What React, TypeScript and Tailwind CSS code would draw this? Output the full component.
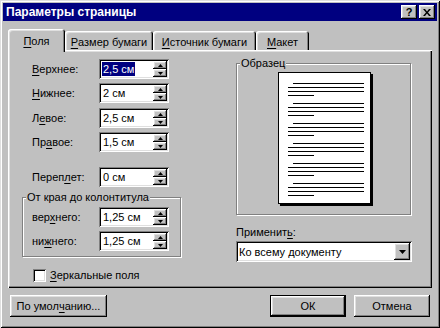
const FONT = "font-['Liberation_Sans',Arial,sans-serif]"

// classic 3D bevels
const raised =
  'shadow-[inset_-1px_-1px_0_#000,inset_1px_1px_0_#fff,inset_-2px_-2px_0_#808080,inset_2px_2px_0_#dfdfdf]'
const sunken =
  'shadow-[inset_1px_1px_0_#808080,inset_-1px_-1px_0_#fff,inset_2px_2px_0_#000,inset_-2px_-2px_0_#dfdfdf]'
const etched = 'border border-[#808080] shadow-[inset_1px_1px_0_#fff,1px_1px_0_#fff]'

function U({ children }: { children: React.ReactNode }) {
  return <span className="underline underline-offset-[1.5px]">{children}</span>
}

function Arrow({ dir }: { dir: 'up' | 'down' }) {
  return (
    <svg width="5" height="3" aria-hidden>
      <polygon points={dir === 'up' ? '2.5,0 5,3 0,3' : '0,0 5,0 2.5,3'} fill="#000" />
    </svg>
  )
}

function Spin({ value, selected }: { value: string; selected?: boolean }) {
  return (
    <div className={`flex h-[20px] w-[70px] bg-white p-[2px] ${sunken}`}>
      <div className="flex flex-1 items-center pl-px">
        <span className={selected ? 'bg-[#000080] px-px leading-[14px] text-white' : 'px-px leading-[14px]'}>
          {value}
        </span>
      </div>
      <div className="flex w-[14px] flex-col">
        <div className={`flex h-[8px] items-center justify-center bg-[#c0c0c0] ${raised}`}>
          <Arrow dir="up" />
        </div>
        <div className={`flex h-[8px] items-center justify-center bg-[#c0c0c0] ${raised}`}>
          <Arrow dir="down" />
        </div>
      </div>
    </div>
  )
}

function Row({ label, value, selected }: { label: React.ReactNode; value: string; selected?: boolean }) {
  return (
    <div className="flex h-[20px] items-center">
      <span className="w-[67px]">{label}</span>
      <Spin value={value} selected={selected} />
    </div>
  )
}

function Tab({ children, w, active }: { children: React.ReactNode; w: string; active?: boolean }) {
  if (active)
    return (
      <div
        className={`relative z-10 -mb-[2px] flex h-[23px] ${w} justify-center rounded-t-[3px] bg-[#c0c0c0] pt-[5px] leading-[14px] shadow-[inset_1px_1px_0_#fff,inset_-1px_0_0_#000,inset_-2px_0_0_#808080,inset_2px_2px_0_#dfdfdf]`}
      >
        {children}
      </div>
    )
  return (
    <div
      className={`flex h-[19px] ${w} justify-center rounded-t-[3px] bg-[#c0c0c0] pt-[4px] leading-[14px] shadow-[inset_1px_1px_0_#fff,inset_-1px_0_0_#000,inset_-2px_0_0_#808080,inset_2px_2px_0_#dfdfdf]`}
    >
      {children}
    </div>
  )
}

function Sample() {
  const groups = [0, 1, 2, 3, 4, 5]
  return (
    <svg width="95" height="134" aria-hidden>
      <rect x="2" y="2" width="93" height="132" fill="#000" />
      <rect x="0.5" y="0.5" width="92" height="131" fill="#fff" stroke="#000" />
      {groups.map((g) => {
        const y = 11.5 + g * 20
        return (
          <g key={g} stroke="#000" strokeWidth="1">
            <line x1="15" y1={y} x2="86" y2={y} />
            <line x1="10" y1={y + 4} x2="86" y2={y + 4} />
            <line x1="10" y1={y + 8} x2="86" y2={y + 8} />
            <line x1="10" y1={y + 12} x2="36" y2={y + 12} />
          </g>
        )
      })}
    </svg>
  )
}

export default function App() {
  return (
    <div
      className={`${FONT} h-[328px] w-[440px] bg-[#c0c0c0] p-[3px] text-[11px] text-black shadow-[inset_1px_1px_0_#dfdfdf,inset_-1px_-1px_0_#000,inset_2px_2px_0_#fff,inset_-2px_-2px_0_#808080]`}
    >
      {/* title bar */}
      <div className="flex h-[18px] items-center justify-between bg-[#000080] pl-[3px] pr-[2px]">
        <span className="text-[12px] font-bold leading-[14px] text-white">Параметры страницы</span>
        <div className="flex gap-[2px]">
          <div className={`flex h-[14px] w-[16px] items-center justify-center bg-[#c0c0c0] text-[11px] font-bold leading-none ${raised}`}>
            ?
          </div>
          <div className={`flex h-[14px] w-[16px] items-center justify-center bg-[#c0c0c0] ${raised}`}>
            <svg width="8" height="7" aria-hidden>
              <path d="M0 0h2l2 2.5L6 0h2L5 3.5 8 7H6L4 4.5 2 7H0l3-3.5z" fill="#000" />
            </svg>
          </div>
        </div>
      </div>

      <div className="px-[5px] pt-[8px]">
        {/* tabs */}
        <div className="flex items-end">
          <Tab w="w-[57px]" active>
            <U>П</U>оля
          </Tab>
          <Tab w="w-[88px]">
            <U>Р</U>азмер бумаги
          </Tab>
          <Tab w="w-[103px]">
            <U>И</U>сточник бумаги
          </Tab>
          <Tab w="w-[53px]">
            <U>М</U>акет
          </Tab>
        </div>

        {/* panel */}
        <div
          className={`flex h-[238px] w-[424px] bg-[#c0c0c0] shadow-[inset_1px_1px_0_#fff,inset_-1px_-1px_0_#000,inset_-2px_-2px_0_#808080,inset_2px_2px_0_#dfdfdf]`}
        >
          <div className="flex w-[228px] flex-col pl-[14px] pt-[9px]">
            <div className="ml-[10px] flex flex-col">
              <Row label={<><U>В</U>ерхнее:</>} value="2,5 см" selected />
              <div className="mt-[4px]">
                <Row label={<><U>Н</U>ижнее:</>} value="2 см" />
              </div>
              <div className="mt-[5px]">
                <Row label={<>Л<U>е</U>вое:</>} value="2,5 см" />
              </div>
              <div className="mt-[4px]">
                <Row label={<>Пр<U>а</U>вое:</>} value="1,5 см" />
              </div>
              <div className="mt-[15px]">
                <Row label={<>Переп<U>л</U>ет:</>} value="0 см" />
              </div>
            </div>

            <div className={`mt-[10px] flex h-[60px] w-[159px] flex-col ${etched}`}>
              <span className="-mt-[8px] ml-[3px] w-fit bg-[#c0c0c0] px-px leading-[14px]">От края до колонтитула</span>
              <div className="ml-[9px] mt-[3px]">
                <Row label={<>вер<U>х</U>него:</>} value="1,25 см" />
              </div>
              <div className="ml-[9px] mt-[4px]">
                <Row label={<>ни<U>ж</U>него:</>} value="1,25 см" />
              </div>
            </div>

            <div className="ml-[11px] mt-[11px] flex items-center gap-[4px]">
              <div className={`h-[13px] w-[13px] bg-white ${sunken}`} />
              <span className="leading-[14px]">
                <U>З</U>еркальные поля
              </span>
            </div>
          </div>

          <div className="flex w-[176px] flex-col pt-[13px]">
            <div className={`flex h-[152px] w-[175px] flex-col ${etched}`}>
              <span className="-mt-[8px] ml-[3px] w-fit bg-[#c0c0c0] px-px leading-[14px]">Образец</span>
              <div className="ml-[41px] mt-[2px]">
                <Sample />
              </div>
            </div>
            <span className="mt-[10px] leading-[14px]">
              Применит<U>ь</U>:
            </span>
            <div className={`mt-[2px] flex h-[21px] w-[176px] items-center bg-white p-[2px] ${sunken}`}>
              <span className="flex-1 pl-[1px] leading-[14px]">Ко всему документу</span>
              <div className={`flex h-[17px] w-[16px] items-center justify-center bg-[#c0c0c0] ${raised}`}>
                <svg width="7" height="4" aria-hidden>
                  <polygon points="0,0 7,0 3.5,4" fill="#000" />
                </svg>
              </div>
            </div>
          </div>
        </div>

        {/* buttons */}
        <div className="mt-[7px] flex items-center pl-[2px] pr-[2px]">
          <div className={`flex h-[22px] w-[97px] items-center justify-center bg-[#c0c0c0] ${raised}`}>
            По умол<U>ч</U>анию...
          </div>
          <div className="flex-1" />
          <div
            className={`flex h-[22px] w-[76px] items-center justify-center bg-[#c0c0c0] shadow-[inset_0_0_0_1px_#000,inset_-2px_-2px_0_#000,inset_2px_2px_0_#fff,inset_-3px_-3px_0_#808080,inset_3px_3px_0_#dfdfdf]`}
          >
            ОК
          </div>
          <div className={`ml-[8px] flex h-[22px] w-[76px] items-center justify-center bg-[#c0c0c0] ${raised}`}>
            Отмена
          </div>
        </div>
      </div>
    </div>
  )
}
